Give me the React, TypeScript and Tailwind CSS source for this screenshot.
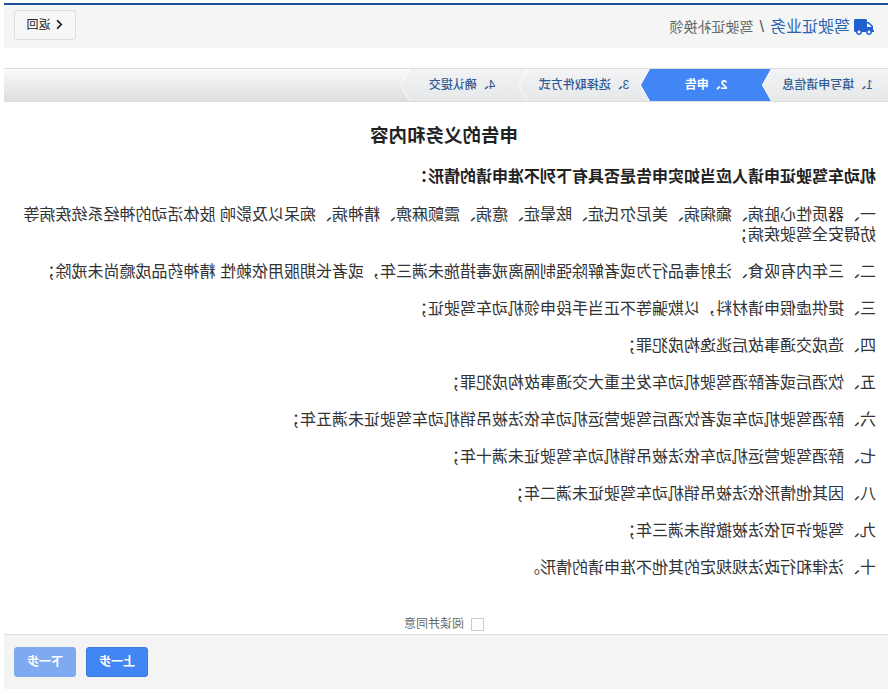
import React from "react";
import { FaTruck, FaChevronLeft } from "react-icons/fa";

const font = "font-['Liberation_Sans','Noto_Sans_CJK_SC',sans-serif]";

const rules = [
	"一、器质性心脏病、癫痫病、美尼尔氏症、眩晕症、癔病、震颤麻痹、精神病、痴呆以及影响 肢体活动的神经系统疾病等妨碍安全驾驶疾病；",
	"二、三年内有吸食、注射毒品行为或者解除强制隔离戒毒措施未满三年，或者长期服用依赖性 精神药品成瘾尚未戒除；",
	"三、提供虚假申请材料，以欺骗等不正当手段申领机动车驾驶证；",
	"四、造成交通事故后逃逸构成犯罪；",
	"五、饮酒后或者醉酒驾驶机动车发生重大交通事故构成犯罪；",
	"六、醉酒驾驶机动车或者饮酒后驾驶营运机动车依法被吊销机动车驾驶证未满五年；",
	"七、醉酒驾驶营运机动车依法被吊销机动车驾驶证未满十年；",
	"八、因其他情形依法被吊销机动车驾驶证未满二年；",
	"九、驾驶许可依法被撤销未满三年；",
	"十、法律和行政法规规定的其他不准申请的情形。",
];

const chevron = "[clip-path:polygon(0_0,calc(100%-9px)_0,100%_50%,calc(100%-9px)_100%,0_100%,9px_50%)]";
const firstChevron = "[clip-path:polygon(0_0,calc(100%-9px)_0,100%_50%,calc(100%-9px)_100%,0_100%)]";

const steps = [
	{ label: "1、填写申请信息", width: "w-[126px]", shape: firstChevron, tone: "bg-gradient-to-b from-[#f2f3f4] to-[#e6e8ea] text-[#2f5a94] font-medium pr-1" },
	{ label: "2、申告", width: "w-[131px]", shape: chevron, tone: "bg-[#4285f4] text-white font-bold" },
	{ label: "3、选择取件方式", width: "w-[131px]", shape: chevron, tone: "bg-gradient-to-b from-[#f2f3f4] to-[#e6e8ea] text-[#2f5a94] font-medium" },
	{ label: "4、确认提交", width: "w-[127px]", shape: chevron, tone: "bg-gradient-to-b from-[#f2f3f4] to-[#e6e8ea] text-[#2f5a94] font-medium pl-1" },
];

export default function App() {
	return (
		<div className={`${font} -scale-x-100 w-[888px] h-[694px] overflow-hidden bg-white pt-[3px] pr-1 text-[#333]`}>
			<div className="border-t-2 border-[#1d4f9c] bg-[#f4f6f6] h-[45px] flex items-center justify-between pl-[14px] pr-[10px]">
				<div className="flex items-center gap-1">
					<FaTruck className="-scale-x-100 text-[#2060d0] w-[20px] h-[16px]" />
					<span className="text-base text-[#2a62b0]">驾驶证业务</span>
					<span className="text-base text-[#555] mx-0.5">/</span>
					<span className="text-sm text-[#666]">驾驶证补换领</span>
				</div>
				<button className="-mt-[4px] w-[62px] h-[30px] rounded-[3px] border border-[#ddd] bg-[#f7f7f7] text-xs text-[#222] flex items-center justify-center gap-1">
					<FaChevronLeft className="w-[9px] h-[11px]" />
					<span>返回</span>
				</button>
			</div>

			<div className="mt-5 h-[34px] border-t border-[#ddd] border-b bg-gradient-to-b from-[#fafafa] to-[#dedede] flex">
				{steps.map((step) => (
					<div key={step.label} className={`h-full ${step.width} -mr-[9px] shrink-0 bg-white/80 ${step.shape}`}>
						<div className={`h-full w-[calc(100%-1px)] flex items-center justify-center text-xs ${step.shape} ${step.tone}`}>
							{step.label}
						</div>
					</div>
				))}
			</div>

			<h2 className="mt-[22px] -mr-1 text-[18.5px] font-bold text-center leading-[24px] text-[#222]">申告的义务和内容</h2>
			<h3 className="mt-[17px] pl-3 text-base font-bold leading-[24px] text-[#222]">机动车驾驶证申请人应当如实申告是否具有下列不准申请的情形：</h3>

			<div className="mt-[16px] pl-3 pr-[18px] flex flex-col gap-[17px] text-base leading-[20px]">
				{rules.map((r) => (
					<p key={r}>{r}</p>
				))}
			</div>

			<label className="mt-[38px] ml-[404px] flex items-center gap-[7px] text-xs text-[#666] h-4">
				<span className="w-[13px] h-[13px] border border-[#ccc] bg-white" />
				阅读并同意
			</label>

			<div className="mt-[2px] h-[55px] border-t border-[#ddd] bg-[#f4f4f4] flex justify-end items-center gap-[10px] pr-[10px]">
				<button className="w-[62px] h-[30px] rounded-[3px] bg-[#4285f4] border border-[#3b78dc] text-white text-xs font-bold">上一步</button>
				<button className="w-[62px] h-[30px] rounded-[3px] bg-[#7eaaf2] border border-[#7eaaf2] text-white text-xs font-bold">下一步</button>
			</div>
		</div>
	);
}
